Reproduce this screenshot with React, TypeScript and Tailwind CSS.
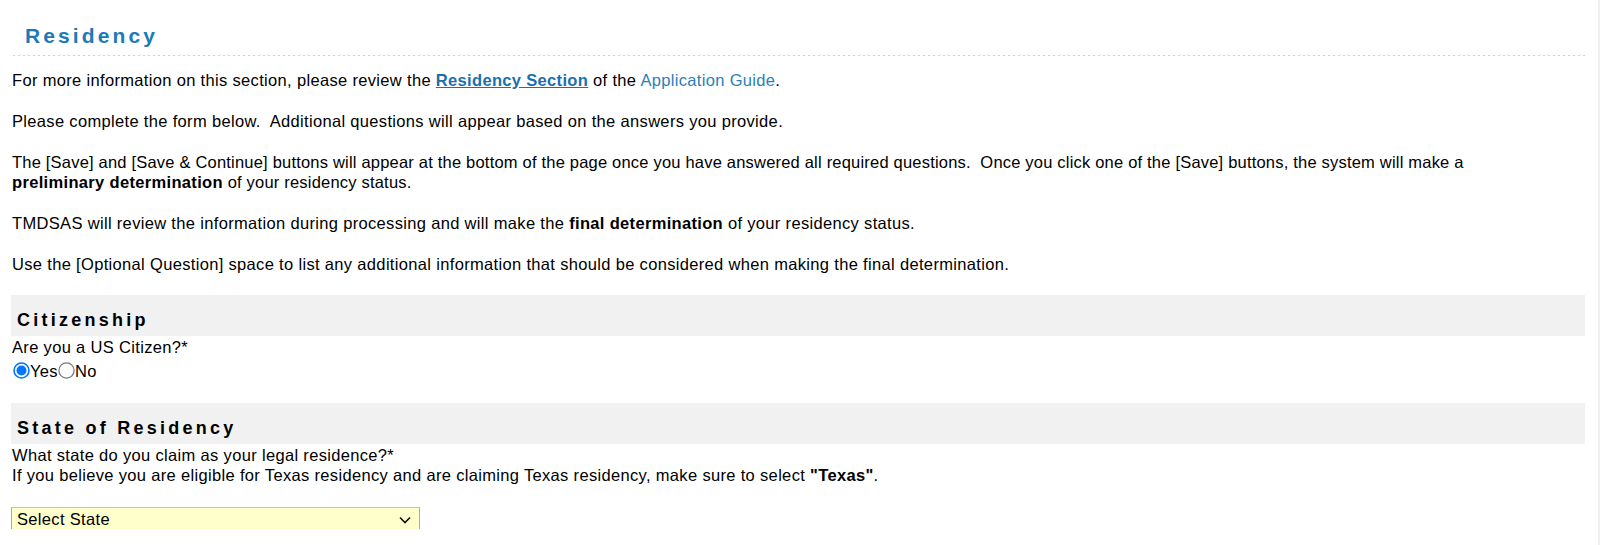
import { useState } from 'react';

const SP = '\u00a0 ';

function SectionBar({ title }: { title: string }) {
  return (
    <div className="bg-[#f1f1f1] pl-[6px] pt-[14px] pb-[5px]">
      <h3 className="text-[18px] leading-[22px] font-bold tracking-[3.25px] text-black">{title}</h3>
    </div>
  );
}

function Radio({ checked, label, onSelect }: { checked: boolean; label: string; onSelect: () => void }) {
  return (
    <label className="flex items-center cursor-pointer" onClick={onSelect}>
      {checked ? (
        <svg width="17" height="17" viewBox="0 0 17 17" className="block">
          <circle cx="8.5" cy="8.5" r="7.5" fill="#fff" stroke="#0075ff" strokeWidth="1.6" />
          <circle cx="8.5" cy="8.5" r="5" fill="#0075ff" />
        </svg>
      ) : (
        <svg width="17" height="17" viewBox="0 0 17 17" className="block">
          <circle cx="8.5" cy="8.5" r="7.6" fill="#fff" stroke="#767676" strokeWidth="1.2" />
        </svg>
      )}
      <span>{label}</span>
    </label>
  );
}

export default function App() {
  const [citizen, setCitizen] = useState<'yes' | 'no'>('yes');

  return (
    <div className="min-h-screen w-[1600px] bg-white border-r-2 border-[#efefef] font-['Liberation_Sans',Arial,sans-serif] text-black text-[16.5px] tracking-[0.33px] leading-[20.4px]">
      <div className="ml-[11px] w-[1574px]">
        {/* Page title */}
        <div className="pt-[24px] pb-[7px] pl-[14px]">
          <h2 className="text-[21px] leading-[24px] font-bold tracking-[3.1px] text-[#1b7ab7]">Residency</h2>
        </div>
        <div className="ml-[2px] h-px bg-[repeating-linear-gradient(to_right,#d8d1b3_0_2px,transparent_2px_5px)]" />

        {/* Intro */}
        <div className="pl-px pt-[14px] flex flex-col gap-[20.4px]">
          <p>
            For more information on this section, please review the{' '}
            <a href="#" className="font-bold underline text-[#1a6fae]">Residency Section</a> of the{' '}
            <a href="#" className="text-[#2a7fba]">Application Guide</a>.
          </p>
          <p>Please complete the form below.{SP}Additional questions will appear based on the answers you provide.</p>
          <p className="tracking-[0.2px]">
            The [Save] and [Save &amp; Continue] buttons will appear at the bottom of the page once you have answered all
            required questions.{SP}Once you click one of the [Save] buttons, the system will make a
            <br />
            <b className="tracking-[0.33px]">preliminary determination</b> of your residency status.
          </p>
          <p>
            TMDSAS will review the information during processing and will make the <b>final determination</b> of your
            residency status.
          </p>
          <p>
            Use the [Optional Question] space to list any additional information that should be considered when making
            the final determination.
          </p>
        </div>

        {/* Citizenship */}
        <div className="mt-[21px]">
          <SectionBar title="Citizenship" />
          <div className="pl-px mt-px">
            <p>Are you a US Citizen?*</p>
            <div className="flex items-center h-[27px] pl-[1px]">
              <Radio checked={citizen === 'yes'} label="Yes" onSelect={() => setCitizen('yes')} />
              <Radio checked={citizen === 'no'} label="No" onSelect={() => setCitizen('no')} />
            </div>
          </div>
        </div>

        {/* State of Residency */}
        <div className="mt-[18.5px]">
          <SectionBar title="State of Residency" />
          <div className="pl-px mt-px">
            <p>What state do you claim as your legal residence?*</p>
            <p>
              If you believe you are eligible for Texas residency and are claiming Texas residency, make sure to select{' '}
              <b>"Texas"</b>.
            </p>
            <div className="mt-[21px] -ml-px w-[409px] h-[22px] bg-[#ffffcc] border border-b-0 border-t-[#c4c4c4] border-x-[#a9a9a9] flex items-start justify-between pl-[5px] pr-[8px]">
              <span className="leading-[18px] pt-[2px]">Select State</span>
              <svg width="12" height="8" viewBox="0 0 12 8" className="mt-[8px]">
                <path d="M1 1.5 L6 6.5 L11 1.5" fill="none" stroke="#111" strokeWidth="1.6" />
              </svg>
            </div>
          </div>
        </div>
      </div>
    </div>
  );
}
